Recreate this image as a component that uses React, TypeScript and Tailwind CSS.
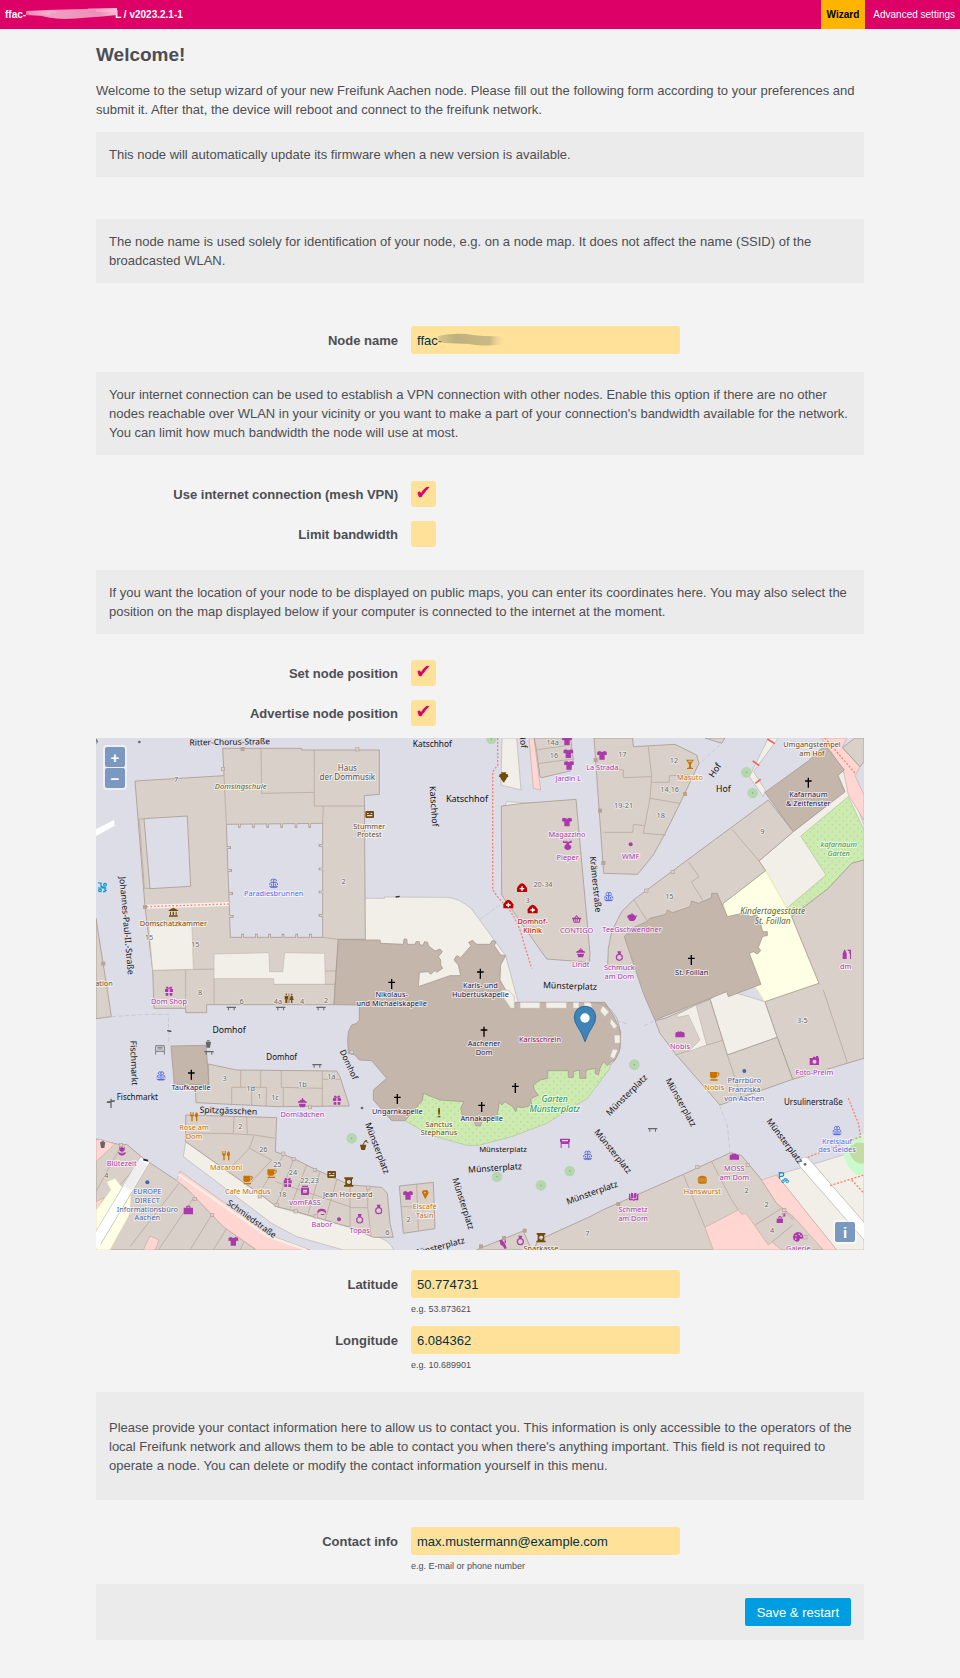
import { useState } from "react";
import type { InputHTMLAttributes, ReactNode } from "react";

/* ---------- map primitives (map units: three per pixel) ---------- */

type Kind =
  | "shirt" | "fountain" | "cross" | "gift" | "food" | "cup" | "burger" | "dot" | "museum" | "mask"
  | "medic" | "basket" | "cake" | "ring" | "teapot" | "bench" | "bottle" | "camera" | "glass" | "bag"
  | "bread" | "book" | "palette" | "bed" | "table" | "tulip" | "signpost" | "toilets" | "jar" | "planter"
  | "ice" | "statue" | "perfume" | "bin" | "vase" | "bike" | "parking" | "wig" | "bank" | "case" | "comb";

const GLYPHS: Record<Kind, ReactNode> = {
  shirt: <path d="M-6-13L-14-11 -15-2 -8-1V13H8V-1L15-2 14-11 6-13Q0-7-6-13Z" />,
  fountain: (
    <g fill="none" stroke="currentColor" strokeWidth="3">
      <path d="M0-12V10M0-10Q-8-15-8-5M0-10Q8-15 8-5M0-1Q-11-6-12 6M0-1Q11-6 12 6M-6 8V2M6 8V2" />
      <path d="M-13 10H13L8 14H-8Z" fill="currentColor" strokeWidth="1" />
    </g>
  ),
  cross: <path d="M-2-15H2V-7H10V-3H2V15H-2V-3H-10V-7H-2Z" />,
  gift: <path d="M-12-6H-2V3H-12ZM2-6H12V3H2ZM-10 6H-2V14H-10ZM2 6H10V14H2ZM-2-7Q-13-7-8-13Q-2-14 0-8Q2-14 8-13Q13-7 2-7Z" />,
  food: <path d="M-12-14V-6Q-12-1-8 0V14H-4V0Q0-1 0-6V-14H-2V-6H-5V-14H-7V-6H-10V-14ZM8-14Q1-9 3 0L6 2V14H10V2Q15-6 8-14Z" />,
  cup: (
    <g>
      <path d="M-13-12H8V1Q8 7 2 7H-7Q-13 7-13 1ZM-12 10H10V14H-12Z" />
      <path d="M8-9H14Q14 1 8 1" fill="none" stroke="currentColor" strokeWidth="3" />
    </g>
  ),
  burger: <path d="M-14-3Q-12-12 0-12Q12-12 14-3ZM-14-1H14V3H-14ZM-14 5H14Q13 12 8 12H-8Q-13 12-14 5Z" />,
  dot: <circle r="6" />,
  museum: <path d="M-14-6L0-14 14-6V-4H-14ZM-10-2H-7V8H-10ZM-2-2H2V8H-2ZM7-2H10V8H7ZM-13 9H13V13H-13Z" />,
  mask: (
    <path fillRule="evenodd" d="M-10-11H10Q13-11 13-8V7Q13 10 10 10H-10Q-13 10-13 7V-8Q-13-11-10-11ZM-8-5V-2H-3V-5ZM3-5V-2H8V-5ZM-8 1V5H8V1Z" />
  ),
  medic: (
    <g>
      <path d="M-15 12V0Q-9-12 0-14Q9-12 15 0V12Z" />
      <path d="M-2-5H2V0H7V4H2V9H-2V4H-7V0H-2Z" fill="#fff" />
    </g>
  ),
  basket: <path fillRule="evenodd" d="M-14-4H-7L0-12 7-4H14V-1H12L9 11H-9L-12-1H-14ZM-3-4H3L0-8ZM-7 1V8H-4V1ZM-1 1V8H2V1ZM4 1V8H7V1Z" />,
  cake: <path d="M-13 0Q-15-5-7-6Q-5-10-1-9V-14H2V-9Q6-10 8-5Q15-5 13 0ZM-11 3H11L7 14H-7Z" />,
  ring: (
    <g>
      <circle cy="4" r="9" fill="none" stroke="currentColor" strokeWidth="3.5" />
      <path d="M-6-14H6L3-5H-3Z" />
    </g>
  ),
  teapot: <path d="M-3-9Q0-15 3-9Q9-7 9-3L15-8 13 0Q10 9 5 11H-6Q-11 6-11 3Q-17-1-12-6Q-8-8-3-9Z" />,
  bench: <path d="M-14-5H14V-1H10V6H7V-1H-7V6H-10V-1H-14Z" />,
  bottle: <path d="M-9-14H-5V-9H-3V-5H-1V14H-13V-5H-11V-9H-9ZM2-14H12V14H9V-2H7V-10H2Z" />,
  camera: <path fillRule="evenodd" d="M-14-8H-5L-3-12H3L5-8V-14H12V-8H14V13H-14ZM0-3A6 6 0 1 0 1-3Z" />,
  glass: <path fillRule="evenodd" d="M-12-14H12L3 0V9L9 12V14H-9V12L-3 9V0ZM-7-11L-5-8H5L7-11Z" />,
  bag: <path d="M-14-7H-6V-13H6V-7H14V13H-14ZM-3-7H3V-10H-3Z" fillRule="evenodd" />,
  case: (
    <g>
      <path fillRule="evenodd" d="M-11 0H-6V-5Q-1-11 4-5V0H8V13H-11ZM-3 0H1V-4H-3Z" />
      <path d="M5-14H16M8-9H16M6-4L14-12M12-16V-5" stroke="currentColor" strokeWidth="2" />
    </g>
  ),
  bread: <path d="M-14 9V-1Q-13-9-8-6Q-5-12-1-7Q3-12 6-6Q13-9 14-1V9Z" />,
  book: <path d="M-14-9H-10V6Q-3 5 0 9Q3 5 10 6V-9H14V11H3L0 13-3 11H-14ZM-8-12Q-2-12-1-9V5Q-3 3-8 3ZM8-12Q2-12 1-9V5Q3 3 8 3Z" />,
  palette: <path fillRule="evenodd" d="M0-15Q17-13 15 2Q13 7 6 5Q4 15-3 14Q-15 12-15 0Q-13-14 0-15ZM-8-6V-2H-4V-6ZM2-10V-6H6V-10ZM-9 4V8H-5V4ZM7-5V-1H11V-5Z" />,
  bed: <path d="M-15-14H15V-4H13V14H10V2H-10V14H-13V-4H-15ZM-9-10V-6H9V-10Z" fillRule="evenodd" />,
  table: <path fill="none" stroke="currentColor" strokeWidth="2.5" d="M-13-13H13V4H-13ZM-13 4V14M13 4V14M-8-8H8M-8-3H8" />,
  tulip: <path d="M-8-14L-4-10 0-14 4-10 8-14V-5Q8 0 1 1V8Q5 2 12 3Q9 13 0 13Q-9 13-12 3Q-5 2-1 8V1Q-8 0-8-5Z" />,
  signpost: <path d="M-2-14H2V-9H13L10-4H2V14H-2V-1H-14L-10-7H-2Z" />,
  toilets: <path d="M-10-14H-6V-9H-10ZM-13-7H-3V3H-5V14H-11V3H-13ZM-1-14H1V14H-1ZM6-14H10V-9H6ZM5-7H11L14 5H10V14H6V5H2Z" />,
  jar: <path fillRule="evenodd" d="M-9-14H9V-10H-9ZM-12-8H12V10Q12 14 8 14H-8Q-12 14-12 10ZM-6-2V7H6V-2Z" />,
  planter: (
    <g>
      <path d="M-11-2H8L4 14H-7Z" />
      <path d="M-3 0L4-13 14-8M4-13L10-15" fill="none" stroke="currentColor" strokeWidth="3" />
    </g>
  ),
  ice: <path fillRule="evenodd" d="M-10-5Q-10-14-2-12Q8-16 10-4L0 15ZM-4-6V-3H2V-6Z" />,
  statue: <path d="M-2-14H2L3-5 2 6H-2L-3-5ZM-4 10H4V14H-4Z" />,
  comb: <path d="M-12-12L-4-14 6 0 10 12 4 14-2 4-8 2ZM4-12H8V-4H4Z" />,
  perfume: <path d="M-14-13H-10V-10H-6V-13H-2V-10H4L12-14V-6L4-5V-2Q12 2 11 8Q8 15 0 15Q-10 14-10 6Q-10 0-4-2V-6H-14Z" />,
  bin: <path d="M-8-8H8L5 10H-5ZM-4-12H4V-9H-4Z" />,
  vase: <path d="M-8-15H8L6-10H12L14-2 9 1 8 6 3 11V15H-3V11L-8 6-9 1-14-2-12-10H-6Z" />,
  bike: (
    <g fill="none" stroke="currentColor" strokeWidth="3.5">
      <circle cx="-7" cy="10" r="4" />
      <circle cx="8" cy="-7" r="4" />
      <path d="M-13-12H-4V-2L8 2V14H2M-13 3H12M8 10H13" />
    </g>
  ),
  parking: (
    <g fill="none" stroke="currentColor" strokeWidth="3.5">
      <path d="M-14 4V-15H-7Q-1-15-1-9.500Q-1-4-7-4H-13" />
      <circle cx="-3" cy="11" r="4" strokeWidth="2.5" />
      <circle cx="10" cy="11" r="4" strokeWidth="2.5" />
      <path d="M-3 11L2 3H8L10 11M2 3L5 10" strokeWidth="2.5" />
    </g>
  ),
  wig: <path d="M-13 5Q-15-10 0-10Q15-10 13 5Q9-3 0-3Q-8-3-13 5ZM-7 5L-8 9M0 6H8V9H-4Z" />,
  bank: <path fillRule="evenodd" d="M-13-14H13V-9H10V9H14V14H-14V9H-10V-9H-13ZM0-6A6 6 0 1 0 1-6Z" />,
};

const PURPLE = "#ac39ac";
const BROWN = "#734a08";
const ORANGE = "#c77400";
const WATER = "#576ddf";
const OFFICE = "#4863a8";
const CHURCH = "#171a5c";
const RED = "#bf0000";
const GREY = "#666666";

const ICONS: [Kind, number, number, string][] = [
  ["bike", 37, 456, "#0092da"], ["fountain", 551, 444, WATER], ["museum", 250, 532, BROWN], ["mask", 839, 239, BROWN],
  ["gift", 237, 768, PURPLE], ["vase", 1241, 127, BROWN], ["shirt", 1431, 17, PURPLE], ["shirt", 1435, 56, PURPLE],
  ["shirt", 1437, 91, PURPLE], ["shirt", 1536, 61, PURPLE], ["shirt", 1431, 261, PURPLE], ["perfume", 1433, 330, PURPLE],
  ["medic", 1296, 459, RED], ["medic", 1255, 508, RED], ["medic", 1328, 523, RED], ["basket", 1460, 552, PURPLE],
  ["cake", 1472, 653, PURPLE], ["cross", 905, 747, "#000"], ["cross", 1171, 716, "#000"], ["glass", 1800, 88, ORANGE],
  ["dot", 1622, 328, PURPLE], ["fountain", 1556, 484, WATER], ["teapot", 1626, 547, PURPLE], ["ring", 1588, 663, PURPLE],
  ["cross", 2155, 143, "#000"], ["cross", 1804, 675, "#000"], ["bottle", 2271, 658, PURPLE],
  ["toilets", 597, 790, BROWN], ["bench", 424, 820, GREY], ["bench", 572, 820, GREY], ["bench", 693, 820, GREY],
  ["bin", 355, 928, GREY], ["bench", 357, 953, GREY], ["bench", 681, 992, GREY], ["table", 210, 945, GREY],
  ["fountain", 213, 1022, WATER], ["cross", 304, 1019, "#000"], ["signpost", 63, 1105, GREY], ["cake", 637, 1103, PURPLE],
  ["gift", 741, 1095, PURPLE], ["food", 312, 1145, ORANGE], ["food", 408, 1262, ORANGE], ["cup", 473, 1334, ORANGE],
  ["cup", 545, 1315, ORANGE], ["gift", 593, 1342, PURPLE], ["jar", 645, 1366, PURPLE], ["mask", 725, 1319, BROWN],
  ["bank", 776, 1341, BROWN], ["wig", 695, 1431, PURPLE], ["dot", 747, 1453, PURPLE], ["bin", 38, 1229, GREY],
  ["tulip", 96, 1249, PURPLE], ["dot", 172, 1342, OFFICE], ["bag", 295, 1425, PURPLE], ["shirt", 430, 1519, PURPLE],
  ["cross", 1182, 890, "#000"], ["cross", 1276, 1059, "#000"], ["cross", 922, 1092, "#000"], ["cross", 1175, 1116, "#000"],
  ["statue", 1047, 1133, BROWN], ["planter", 821, 1231, BROWN], ["bed", 1425, 1225, PURPLE], ["fountain", 1493, 1260, WATER],
  ["shirt", 954, 1381, PURPLE], ["ice", 1006, 1378, ORANGE], ["ring", 866, 1423, PURPLE], ["ring", 809, 1451, PURPLE],
  ["ring", 1291, 1516, PURPLE], ["bank", 1353, 1508, BROWN], ["comb", 1240, 1528, PURPLE],
  ["bread", 1770, 898, PURPLE], ["cup", 1873, 1023, ORANGE], ["dot", 1963, 1008, OFFICE], ["camera", 2173, 977, PURPLE],
  ["fountain", 2241, 1186, WATER], ["bench", 1688, 1184, GREY], ["bread", 1933, 1265, PURPLE], ["burger", 1837, 1334, ORANGE],
  ["book", 1631, 1385, PURPLE], ["parking", 2082, 1328, "#0092da"], ["case", 2071, 1451, PURPLE], ["palette", 2124, 1506, PURPLE],
];

/* x, y of the first line's centre, lines, colour, size */
const PLACES: [number, number, string[], string, number?][] = [
  [551, 474, ["Paradiesbrunnen"], WATER], [250, 564, ["Domschatzkammer"], BROWN], [838, 272, ["Stummer", "Protest"], BROWN],
  [237, 798, ["Dom Shop"], PURPLE], [42, 744, ["ation"], BROWN], [772, 97, ["Haus", "der Dommusik"], "#555555", 24],
  [1435, 130, ["Jardin L"], PURPLE], [1537, 95, ["La Strada"], PURPLE], [1431, 297, ["Magazzino"], PURPLE],
  [1433, 366, ["Pieper"], PURPLE], [1328, 558, ["Domhof-", "Klinik"], RED], [1460, 585, ["CONTIGO"], PURPLE],
  [1472, 688, ["Lindt"], PURPLE], [905, 778, ["Nikolaus-", "und Michaelskapelle"], CHURCH],
  [1171, 751, ["Karls- und", "Hubertuskapelle"], CHURCH], [1800, 126, ["Masuto"], ORANGE], [1622, 362, ["WMF"], PURPLE],
  [1626, 581, ["TeeGschwendner"], PURPLE], [1588, 697, ["Schmuck", "am Dom"], PURPLE],
  [2166, 28, ["Umgangstempel", "am Hof"], BROWN], [2155, 177, ["Kafarnaum", "& Zeitfenster"], CHURCH],
  [1805, 711, ["St. Foillan"], CHURCH], [2267, 694, ["dm"], PURPLE], [303, 1055, ["Taufkapelle"], CHURCH],
  [637, 1138, ["Domlädchen"], PURPLE], [312, 1177, ["Rose am", "Dom"], ORANGE], [408, 1295, ["Macaroni"], ORANGE],
  [473, 1368, ["Café Mundus"], ORANGE], [645, 1400, ["vomFASS"], PURPLE], [773, 1377, ["Jean Horegard"], BROWN],
  [696, 1467, ["Babor"], PURPLE], [95, 1285, ["Blütezeit"], PURPLE],
  [172, 1369, ["EUROPE", "DIRECT", "Informationsbüro", "Aachen"], OFFICE], [1182, 924, ["Aachener", "Dom"], CHURCH],
  [1350, 912, ["Karlsschrein"], "#8b1a5c"], [922, 1128, ["Ungarnkapelle"], CHURCH], [1175, 1150, ["Annakapelle"], CHURCH],
  [1047, 1166, ["Sanctus", "Stephanus"], BROWN], [1004, 1413, ["Eiscafé", "Tasin"], ORANGE], [809, 1485, ["Topas"], PURPLE],
  [1353, 1538, ["Sparkasse"], BROWN], [1770, 934, ["Nobis"], PURPLE], [1873, 1057, ["Nobis"], ORANGE],
  [1963, 1036, ["Pfarrbüro", "Franziska", "von Aachen"], OFFICE], [2173, 1011, ["Foto-Preim"], PURPLE],
  [2241, 1217, ["Kreislauf", "des Geldes"], WATER], [1933, 1300, ["MOSS", "am Dom"], PURPLE], [1837, 1367, ["Hanswurst"], ORANGE],
  [1629, 1422, ["Schmetz", "am Dom"], PURPLE], [2125, 1539, ["Galerie"], PURPLE],
];

const NUMBERS: [number, number, string][] = [
  [258, 131, "7"], [761, 437, "2"], [177, 605, "15"], [316, 628, "15"], [330, 771, "8"], [455, 798, "6"], [564, 799, "4a"],
  [636, 797, "4"], [708, 795, "2"], [1388, 22, "14a"], [1392, 61, "16"], [1359, 448, "20-34"], [1313, 495, "3"],
  [1597, 58, "17"], [1752, 74, "12"], [1739, 161, "14,16"], [1601, 210, "19-21"], [1712, 241, "18"], [2017, 287, "9"],
  [1738, 482, "15"], [2137, 855, "3-5"], [404, 1030, "3"], [482, 1058, "1d"], [508, 1084, "1"], [555, 1086, "1c"],
  [637, 1046, "1b"], [724, 1024, "1a"], [451, 1173, "2"], [520, 1243, "26"], [562, 1288, "25"], [609, 1310, "24"],
  [659, 1334, "22,23"], [577, 1377, "18"], [49, 1319, "4"], [892, 1492, "6"], [956, 1453, "2"], [1492, 1493, "7"],
  [1970, 1364, "2"], [2030, 1406, "2"], [2046, 1484, "4"],
];

/* x, y centre, text, rotation, size */
const STREETS: [number, number, string, number, number][] = [
  [419, 19, "Ritter-Chorus-Straße", -1, 25], [1027, 26, "Katschhof", 0, 25], [1131, 189, "Katschhof", 0, 27],
  [1032, 214, "Katschhof", 86, 26], [110, 572, "Johannes-Paul-II.-Straße", 85, 26], [1517, 448, "Krämerstraße", 84, 26],
  [1440, 753, "Münsterplatz", 2, 26], [1874, 105, "Hof", -57, 27], [1900, 161, "Hof", 0, 26], [1299, 17, "Hof", 82, 26],
  [417, 884, "Domhof", 0, 26], [575, 963, "Domhof", 0, 24], [778, 988, "Domhof", 65, 25], [132, 984, "Fischmarkt", 88, 26],
  [142, 1083, "Fischmarkt", 0, 24], [415, 1127, "Spitzgässchen", 2, 26], [486, 1450, "Schmiedstraße", 36, 25],
  [1239, 1241, "Münsterplatz", 0, 23], [1215, 1299, "Münsterplatz", -4, 26], [862, 1239, "Münsterplatz", 69, 26],
  [1120, 1406, "Münsterplatz", 72, 26], [1506, 1373, "Münsterplatz", -20, 26], [1045, 1536, "Münsterplatz", -15, 26],
  [1610, 1080, "Münsterplatz", -45, 26], [1773, 1102, "Münsterplatz", 61, 26], [1569, 1249, "Münsterplatz", 51, 26],
  [2084, 1218, "Münsterplatz", 53, 26], [2170, 1099, "Ursulinerstraße", 0, 24],
];

const BUILDINGS = [
  "135,138 402,122 398,40 635,40 635,45 868,45 868,178 823,182 826,613 745,613 735,750 732,809 350,809 350,833 287,833 287,820 192,820 188,706 165,515",
  "18,550 40,690 53,770 64,845 18,851",
  "1234,213 1300,205 1458,193 1500,655 1498,682 1370,672 1340,630 1235,480",
  "1333,9 1340,50 1350,125 1355,128 1440,108 1450,75 1442,9",
  "1512,9 1628,9 1630,35 1755,28 1820,60 1827,85 1770,205 1728,290 1690,360 1643,418 1541,415",
  "1630,495 2035,195 2110,290 2007,378 2027,407 1900,505 1880,560 1700,640 1660,705 1600,705 1553,690 1555,640 1565,590 1595,530",
  "2257,38 2295,9 2322,9 2322,80 2310,95",
  "1845,9 1895,25 1905,9",
  "2105,545 2215,460 2285,385 2322,375 2322,970 2108,1033 2062,907 2025,800 2187,745",
  "1695,857 1725,850 1860,792 1912,960 2062,907 2108,1033 1890,1110 1755,955 1710,895",
  "1540,1424 1780,1318 1922,1253 1955,1262 2015,1335 2060,1405 2110,1445 2170,1505 2200,1545 1330,1545 1345,1515 1500,1445",
  "1170,1540 1300,1488 1325,1545 1160,1545",
  "928,1353 1030,1342 1035,1481 940,1495",
  "355,987 440,1005 740,1008 750,1025 778,1113 565,1115 318,1103 316,1055 355,1050",
  "287,1140 560,1148 556,1250 610,1270 680,1305 780,1350 875,1357 892,1375 900,1465 910,1507 850,1507 780,1477 620,1430 560,1415 500,1370 400,1300 287,1220",
  "18,1212 50,1220 95,1230 110,1228 160,1270 260,1337 300,1370 400,1475 500,1545 18,1545",
];

const WALLS =
  "M513 40L515 175 673 172M673 45V213H826M700 213L698 265M402 122L409 268M143 253L162 251M148 255L163 460H180M188 706L372 702M287 704V820M372 731V809M704 708H742V748H551M698 607L745 613" +
  "M1337 45L1440 30M1343 86L1448 72M1675 35L1685 125 1600 128 1600 105 1555 98M1685 125L1680 190 1770 205M1680 190L1660 295 1728 300M1541 292H1628L1630 268 1662 272M1685 142H1738V122L1800 120" +
  "M1926 283L2007 378M1795 380L1827 425 1804 442 1838 495M1632 495L1675 562M2200 765L2272 983M1755 960L1900 915M1912 960L1955 1088M1815 810L1850 930" +
  "M1780 1318L1845 1477M1865 1280L1925 1395 1945 1425M1995 1470L2075 1420 2110 1455M2035 1530L2108 1470" +
  "M980 1347L985 1487M935 1415H985" +
  "M452 1007V1057H425V1110M512 1007V1057M452 1057H485V1110M485 1057H530L528 1113M574 1007V1057L697 1060M580 1060V1115M697 1007V1115M700 1033H750" +
  "M287 1195L400 1195 492 1200 556 1210M432 1145L430 1195M470 1147L472 1198M492 1202L478 1240 545 1275M478 1240L410 1310M545 1275L470 1355M580 1262L510 1370M610 1275L560 1405M650 1290L600 1420M690 1310L655 1435M740 1335L705 1455M556 1340L780 1415M780 1350V1480M833 1357V1418L780 1418M833 1418L843 1500" +
  "M160 1270L55 1390M267 1345L120 1535M310 1390L205 1545M365 1440L300 1545M410 1480L370 1545M465 1515L450 1545M95 1230L18 1370";

const DOM =
  "745,613 824,615 870,615 872,625 940,628 942,612 950,612 952,628 975,628 978,620 988,620 990,630 1000,630 1003,620 1013,622 1015,632 1035,648 1050,642 1057,650 1045,665 1052,675 1052,690 1058,700 1040,712 1035,706 1022,718 1015,710 988,712 985,755 1080,722 1112,722 1105,690 1092,675 1100,662 1112,668 1143,632 1136,622 1148,616 1160,628 1200,628 1207,616 1218,620 1213,632 1232,660 1247,662 1232,690 1230,735 1247,765 1262,820 1275,820 1275,802 1545,802 1572,845 1592,890 1590,940 1575,975 1560,982 1552,992 1540,980 1530,1000 1525,1020 1515,1015 1518,1000 1488,1005 1487,1030 1470,1030 1468,1005 1450,1010 1450,1027 1435,1027 1435,1007 1373,1007 1373,1030 1350,1035 1330,1050 1333,1065 1345,1080 1322,1092 1325,1110 1298,1118 1282,1115 1277,1130 1268,1115 1252,1105 1245,1100 1235,1110 1228,1100 1222,1140 1175,1160 1172,1173 1158,1173 1152,1160 1120,1152 1112,1120 1122,1100 1050,1095 1000,1075 998,1095 945,1157 905,1157 850,1095 850,1065 890,1030 845,977 808,975 795,960 775,955 773,920 775,890 785,870 800,865 808,855 808,810 732,809";

const FOILLAN =
  "1603,605 1625,580 1670,560 1680,550 1728,538 1732,525 1748,533 1800,515 1805,498 1825,505 1865,488 1865,475 1882,475 1888,490 1912,545 1970,532 1980,545 2000,540 2013,570 2018,590 2032,590 2032,602 2018,604 2005,637 2012,647 2002,657 1990,650 1978,655 2013,748 1915,785 1910,770 1860,790 1695,855 1688,840 1660,775";

function CityMap() {
  return (
    <svg viewBox="18 9 2304 1536" role="img" aria-label="Map" className="block aspect-[3/2] w-full font-['Noto_Sans',sans-serif]">
      <defs>
        <pattern id="garden" width="22" height="22" patternUnits="userSpaceOnUse">
          <rect width="22" height="22" fill="#cdebb0" />
          <circle cx="5" cy="5" r="1.6" fill="#8fbf72" />
          <circle cx="16" cy="16" r="1.6" fill="#8fbf72" />
        </pattern>
      </defs>
      <rect x="18" y="9" width="2304" height="1536" fill="#dddde8" />

      {/* open ground */}
      <g fill="#f2efe9" stroke="#b8b4b0" strokeWidth="2">
        <path d="M824 490H883V486L1070 487Q1110 490 1145 522L1247 662 1290 822H824Z" />
        <path d="M1236 9H1280L1293 165 1233 150Z" />
        <path d="M1250 200L1330 205 1290 215 1245 212Z" />
        <path d="M2007 378L2110 290 2265 170 2245 120 2260 105 2322 270V400L2200 520 2105 545 2027 407Z" />
        <path d="M1860 792L1910 765 2025 800 2062 907 1912 960Z" />
        <path d="M287 1220L400 1300 500 1370 560 1415 780 1477 850 1503Q895 1510 912 1545H760L620 1505 545 1465 280 1265Z" />
        <path d="M2060 1320L2260 1260 2322 1245V1545H2240Z" />
        <path d="M2035 9H2065L1990 110 2026 165 2020 185 1978 125Z" />
      </g>
      <path d="M2032 12l22 14M1988 78l20 14M1996 145l16-12" stroke="#f06060" strokeWidth="5" />
      <path d="M18 283L72 255 74 272 18 303Z" fill="#fff" />

      {/* retail and school ground */}
      <g fill="#ffd6d1" stroke="#c9aaa6" strokeWidth="2">
        <path d="M1317 9H1332L1352 165 1330 160Z" />
        <path d="M2195 9H2270L2257 38 2310 95 2295 122 2322 180V255L2275 180 2260 105Z" />
      </g>
      <path d="M1900 505L2027 407 2105 545 2187 745 2025 800 1960 700Z" fill="#ffffe5" stroke="#f0eeb0" strokeWidth="3" />

      {/* gardens */}
      <g fill="url(#garden)" stroke="#a9c490" strokeWidth="2">
        <path d="M945 1157L1000 1075 1320 1060 1370 1005 1560 975V1000L1492 1090 1370 1165 1265 1205 1165 1231H1130L1020 1200Z" />
        <path d="M2132 303L2275 185 2322 285V375L2285 385 2215 460 2105 543 2090 520 2208 420Z" />
      </g>
      <path d="M2260 1255Q2260 1225 2322 1195V1325Q2275 1320 2260 1255Z" fill="#c8facc" />
      <path d="M2275 1240Q2300 1215 2322 1225V1285Q2285 1290 2275 1240Z" fill="#c3dba4" />

      {/* buildings */}
      <g fill="#d9d0c9" stroke="#a89c94" strokeWidth="2.5">
        {BUILDINGS.map((points) => (
          <polygon key={points} points={points} />
        ))}
      </g>
      <path d={WALLS} fill="none" stroke="#bcaa9d" strokeWidth="2.5" />
      <g fill="#dddde8" stroke="#a89c94" strokeWidth="2.5">
        <path d="M162 251L292 243 302 454 180 461Z" />
        <path d="M409 268L698 265V607H421Z" />
      </g>
      <path
        d="M448 266v12M490 266v12M533 266v12M575 266v12M618 266v12M659 266v12M458 608v-12M499 608v-12M539 608v-12M579 608v-12M620 608v-12M661 608v-12M411 338h12M414 406h12M417 475h12M419 544h12M698 331h-12M698 402h-12M698 471h-12M698 541h-12"
        stroke="#a89c94"
        strokeWidth="8"
      />
      <path
        d="M448 264v11M490 264v11M533 264v11M575 264v11M618 264v11M659 264v11M458 609v-10M499 609v-10M539 609v-10M579 609v-10M620 609v-10M661 609v-10M409 338h11M412 406h11M415 475h11M417 544h11M700 331h-11M700 402h-11M700 471h-11M700 541h-11"
        stroke="#d9d0c9"
        strokeWidth="4"
      />
      <g fill="#f2efe9" stroke="#c4b8ae" strokeWidth="2">
        <path d="M176 575L306 573 310 703 188 706Z" />
        <path d="M372 657L537 653 539 710H578L584 653 704 655 706 748H551V731H372Z" />
        <path d="M1760 840L1818 810 1850 930 1795 950 1830 915 1795 840 1765 847Z" />
      </g>

      {/* lower retail strips */}
      <g fill="#ffd6d1" stroke="#c9aaa6" strokeWidth="2">
        <path d="M270 1308L540 1500 660 1545H500L400 1475 290 1360 260 1337Z" />
        <path d="M18 1215L30 1212 75 1227 18 1280Z" />
        <path d="M18 1400L42 1388 18 1432Z" />
        <path d="M180 1503L207 1515 195 1545H160Z" />
        <path d="M1845 1477L1945 1425 1955 1438 1968 1435 2035 1530 2045 1520 2075 1545H1870Z" />
        <path d="M2015 1335L2060 1320 2240 1545H2200L2110 1445 2060 1405Z" />
      </g>
      <path d="M265 1318L530 1502 650 1545" fill="none" stroke="#f5efe8" strokeWidth="7" />
      <path d="M50 1340L75 1330 95 1355 125 1340 120 1435 110 1455 60 1545H18V1425L62 1365Z" fill="#ffffe5" stroke="#ddd8ae" strokeWidth="2" />
      <g fill="none">
        <path d="M165 1275L18 1520" stroke="#c4bdb8" strokeWidth="34" />
        <path d="M165 1275L10 1533" stroke="#fff" strokeWidth="30" />
        <path d="M160 1280L112 1360" stroke="#eeeeee" strokeWidth="29" />
        <path d="M2145 1285L2345 1515" stroke="#c4bdb8" strokeWidth="37" strokeLinecap="round" />
        <path d="M2145 1285L2345 1515" stroke="#fff" strokeWidth="33" strokeLinecap="round" />
        <path d="M160 1274l14 3" stroke="#222" strokeWidth="5" />
      </g>

      {/* churches */}
      <g fill="#c4b6ab" stroke="#a89c94" strokeWidth="2.5">
        <polygon points={DOM} />
        <polygon points={FOILLAN} />
        <path d="M2025 172L2155 78 2205 30 2263 105 2243 122 2265 170 2110 290Z" />
        <path d="M243 933L348 931 357 1048 253 1050Z" />
      </g>
      <g fill="#f2efe9" stroke="#c4b6ab" strokeWidth="2">
        <path d="M1235 765H1255L1273 785V820H1262L1235 780Z" />
        <path d="M1290 802H1350V820H1290ZM1368 802H1430V820H1368ZM1449 802H1467V820H1449ZM1482 802H1502L1507 815 1482 820Z" />
        <path d="M1538 812L1557 830 1545 845 1530 828ZM1562 850L1582 873 1572 883 1560 865ZM1572 900H1591V925H1574ZM1568 942L1584 945 1572 972 1560 965Z" />
      </g>
      <path d="M1500 802Q1555 800 1580 848 1598 895 1588 950 1575 980 1560 990" fill="none" stroke="#a89c94" strokeWidth="2" />

      {/* footpaths and boundaries */}
      <g fill="none">
        <path d="M165 515L417 507" stroke="#f7efec" strokeWidth="12" />
        <path d="M170 515L417 507" stroke="#fa8072" strokeWidth="4" strokeDasharray="5 6" />
        <g stroke="#fa8072" strokeWidth="4" strokeDasharray="6 5">
          <path d="M1223 9V90L1208 110V460Q1210 475 1255 520Q1290 570 1300 620L1325 700" />
          <path d="M2205 9L2298 118" />
          <path d="M2275 1090L2305 1165 2312 1205 2150 1268M2220 1352L2322 1320M2285 1335L2322 1375" />
        </g>
        <g stroke="#c0bfc6" strokeWidth="2" strokeDasharray="14 6">
          <path d="M64 845L170 838 235 838 237 930" />
          <path d="M1170 553L1235 505M1835 80L1890 30" />
          <path d="M1560 850L1615 868M1662 873L1700 853M1888 1110L1912 1170 1920 1250" />
        </g>
        <path d="M917 486l12-2M232 887l12 2" stroke="#333" strokeWidth="4" />
      </g>

      {/* trees and entrances */}
      <g fill="#b5d6ae">
        {[[1204, 12], [1969, 112], [1988, 174], [1633, 989], [785, 1210], [1221, 1325], [1439, 1308], [1353, 1351]].map(([x, y]) => (
          <g key={`${x}-${y}`}>
            <circle cx={x} cy={y} r="16" />
            <circle cx={x} cy={y} r="2" fill="#7aa070" />
          </g>
        ))}
      </g>
      <g fill="#b8a395">
        {[[458, 42], [165, 516], [40, 686], [1517, 75], [1530, 227], [1540, 384], [1785, 177], [1585, 1407], [1173, 1534], [1242, 1509], [1304, 1487]].map(
          ([x, y]) => (
            <rect key={`${x}-${y}`} x={x - 6} y={y - 6} width="12" height="12" />
          ),
        )}
      </g>
      <g fill="#d9d0c9" stroke="#b8a395" strokeWidth="2">
        {[[399, 102], [802, 43], [1748, 411], [1669, 467], [93, 1230], [580, 1256], [611, 1272], [675, 1305], [509, 1384], [560, 1410], [617, 1429], [677, 1444], [314, 1392], [366, 1440], [660, 1116], [835, 1358], [785, 951], [1822, 1296], [1973, 1290], [2083, 1425], [2146, 1507]].map(
          ([x, y]) => (
            <rect key={`${x}-${y}`} x={x - 5} y={y - 5} width="10" height="10" />
          ),
        )}
      </g>
      <g fill="#666">
        <circle cx="148" cy="21" r="4" />
        <circle cx="816" cy="1119" r="4" />
        <circle cx="2145" cy="1288" r="4" />
        <path d="M18 10L24 18 20 28" />
      </g>

      {/* icons */}
      {ICONS.map(([kind, x, y, color]) => (
        <g key={`${kind}-${x}-${y}`} transform={`translate(${x} ${y})`} fill={color} color={color}>
          {GLYPHS[kind]}
        </g>
      ))}

      {/* labels */}
      <g textAnchor="middle" dominantBaseline="central">
        <g fill="#666" fontSize="22" stroke="#ffffff" strokeOpacity="0.55" strokeWidth="5" strokeLinejoin="round" paintOrder="stroke">
          {NUMBERS.map(([x, y, text]) => (
            <text key={`${x}-${y}`} x={x} y={y}>
              {text}
            </text>
          ))}
        </g>
        <g stroke="#ffffff" strokeOpacity="0.6" strokeWidth="6" strokeLinejoin="round" paintOrder="stroke">
          {PLACES.map(([x, y, lines, color, size]) => (
            <text key={`${x}-${y}`} fill={color} fontSize={size ?? 22}>
              {lines.map((line, i) => (
                <tspan key={line} x={x} y={y + i * 26}>
                  {line}
                </tspan>
              ))}
            </text>
          ))}
          <g fontStyle="italic">
            <text x="452" y="152" fontSize="23" fill="#5f6417">Domsingschule</text>
            <text fontSize="25" fill="#5f6417">
              <tspan x="2048" y="526">Kindertagesstätte</tspan>
              <tspan x="2048" y="556">St. Foillan</tspan>
            </text>
            <text fontSize="22" fill="#23964f">
              <tspan x="2246" y="328">kafarnaum</tspan>
              <tspan x="2246" y="353">Garten</tspan>
            </text>
            <text fontSize="26" fill="#23964f">
              <tspan x="1394" y="1091">Garten</tspan>
              <tspan x="1394" y="1121">Münsterplatz</tspan>
            </text>
          </g>
        </g>
        <g fill="#111" stroke="#dddde8" strokeWidth="4" strokeLinejoin="round" paintOrder="stroke">
          {STREETS.map(([x, y, text, angle, size]) => (
            <text key={`${x}-${y}`} fontSize={size} transform={`translate(${x} ${y}) rotate(${angle})`}>
              {text}
            </text>
          ))}
        </g>
      </g>

      {/* node marker */}
      <path d="M1485 920Q1475 892 1462 874Q1453 860 1453 846Q1455 815 1485 814Q1515 815 1517 846Q1517 860 1508 874Q1495 892 1485 920Z" fill="#3f84b8" stroke="#2d6a98" strokeWidth="3" />
      <circle cx="1485" cy="849" r="14" fill="#fff" />
    </svg>
  );
}

/* ---------- form parts ---------- */

function Note({ children, roomy = false }: { children: ReactNode; roomy?: boolean }) {
  return <p className={roomy ? "bg-[#ebebeb] pt-[26px] pr-3 pb-[25px] pl-[13px]" : "bg-[#ebebeb] py-[13px] pr-3 pl-[13px]"}>{children}</p>;
}

function Row({ id, label, hint, children }: { id: string; label: string; hint?: string; children: ReactNode }) {
  return (
    <div className="grid grid-cols-[302px_1fr] items-center gap-x-[13px]">
      <label htmlFor={id} className="text-right font-bold">
        {label}
      </label>
      {children}
      {hint && <p className="col-start-2 pt-[3px] text-[9px] leading-4">{hint}</p>}
    </div>
  );
}

function TextBox(props: InputHTMLAttributes<HTMLInputElement>) {
  return (
    <input
      type="text"
      className="h-7 w-full rounded-[3px] bg-[#ffe199] px-[6px] text-[13px] text-[#003247] outline-none"
      {...props}
    />
  );
}

function Tick({ id, initial = false }: { id: string; initial?: boolean }) {
  const [on, setOn] = useState(initial);
  return (
    <input
      id={id}
      type="checkbox"
      checked={on}
      onChange={(e) => setOn(e.target.checked)}
      className="flex h-[26px] w-[25px] appearance-none justify-center rounded-[3px] bg-[#ffe199] font-['DejaVu_Sans',sans-serif] text-[19px] leading-[22px] text-[#dc0067] checked:before:content-['✔']"
    />
  );
}

const mapButton = "flex size-5 items-center justify-center rounded-[2px] bg-[#7b98c0] text-[15px] leading-none font-bold text-white";

export default function App() {
  return (
    <div className="min-h-screen bg-[#f3f3f3] pb-[38px] font-['Liberation_Sans',Arial,sans-serif] text-[13px] leading-[19px] text-[#4d4e53]">
      <header className="flex h-[29px] items-stretch justify-between bg-[#dc0067] text-[10px] text-white">
        <div className="flex items-center pl-[5px] font-bold">
          <span>ffac-</span>
          <div className="relative pl-[89px]">
            <span>L / v2023.2.1-1</span>
            <svg width="94" height="14" viewBox="0 0 94 14" aria-hidden="true" className="absolute top-[2px] left-0">
              <defs>
                <linearGradient id="smear" x1="0" x2="1">
                  <stop offset="0" stopColor="#f29cc0" stopOpacity="0.7" />
                  <stop offset="0.25" stopColor="#f0a0c2" />
                  <stop offset="0.8" stopColor="#ee8fb8" />
                  <stop offset="1" stopColor="#f6bcd4" />
                </linearGradient>
                <filter id="soft" x="-5%" y="-20%" width="110%" height="140%">
                  <feGaussianBlur stdDeviation="0.7" />
                </filter>
              </defs>
              <path d="M0 4L20 3Q60 2 91 1V8Q60 11 38 12Q22 11 16 9L0 8Z" fill="url(#smear)" filter="url(#soft)" />
              <path d="M1 5H30M3 7H24M62 2H90M70 4H90" stroke="#fbdde9" strokeWidth="0.8" opacity="0.6" />
            </svg>
          </div>
        </div>
        <nav className="flex">
          <a href="#wizard" className="flex items-center bg-[#ffb400] px-[6px] font-bold text-black">
            Wizard
          </a>
          <a href="#advanced" className="flex items-center pr-[5px] pl-2">
            Advanced settings
          </a>
        </nav>
      </header>

      <main className="mx-auto w-4/5">
        <form onSubmit={(e) => e.preventDefault()}>
          <h1 className="pt-[14px] text-[19px] leading-6 font-bold">Welcome!</h1>
          <p className="pt-[14px] pb-[13px]">
            Welcome to the setup wizard of your new Freifunk Aachen node. Please fill out the following form according to
            your preferences and submit it. After that, the device will reboot and connect to the freifunk network.
          </p>

          <Note>This node will automatically update its firmware when a new version is available.</Note>

          <div className="pt-[42px]">
            <Note>
              The node name is used solely for identification of your node, e.g. on a node map. It does not affect the
              name (SSID) of the broadcasted WLAN.
            </Note>
          </div>
          <div className="pt-[43px] pb-[18px]">
            <Row id="node-name" label="Node name">
              <div className="relative w-[269px]">
                <TextBox id="node-name" defaultValue="ffac-" />
                <svg width="72" height="16" viewBox="0 0 72 16" aria-hidden="true" className="absolute top-[6px] left-[26px]">
                  <defs>
                    <linearGradient id="smudge" x1="0" x2="1">
                      <stop offset="0" stopColor="#b9ab7c" stopOpacity="0.5" />
                      <stop offset="0.25" stopColor="#bfb080" />
                      <stop offset="0.75" stopColor="#c9b985" />
                      <stop offset="1" stopColor="#ffe199" stopOpacity="0" />
                    </linearGradient>
                  </defs>
                  <path d="M1 4Q20 0 36 3Q50 5 70 4L66 12Q50 15 32 12L8 11 2 10Z" fill="url(#smudge)" filter="url(#soft)" />
                </svg>
              </div>
            </Row>
          </div>

          <Note>
            Your internet connection can be used to establish a VPN connection with other nodes. Enable this option if
            there are no other nodes reachable over WLAN in your vicinity or you want to make a part of your connection's
            bandwidth available for the network. You can limit how much bandwidth the node will use at most.
          </Note>
          <div className="flex flex-col gap-[14px] pt-[26px] pb-[23px]">
            <Row id="mesh-vpn" label="Use internet connection (mesh VPN)">
              <Tick id="mesh-vpn" initial />
            </Row>
            <Row id="limit" label="Limit bandwidth">
              <Tick id="limit" />
            </Row>
          </div>

          <Note>
            If you want the location of your node to be displayed on public maps, you can enter its coordinates here. You
            may also select the position on the map displayed below if your computer is connected to the internet at the
            moment.
          </Note>
          <div className="flex flex-col gap-[14px] pt-[26px] pb-3">
            <Row id="set-position" label="Set node position">
              <Tick id="set-position" initial />
            </Row>
            <Row id="advertise" label="Advertise node position">
              <Tick id="advertise" initial />
            </Row>
          </div>

          <div className="relative overflow-hidden">
            <CityMap />
            <div className="absolute top-[7px] left-[7px] flex flex-col gap-px rounded-[4px] bg-white/50 p-[2px]">
              <button type="button" aria-label="Zoom in" className={mapButton}>
                +
              </button>
              <button type="button" aria-label="Zoom out" className={mapButton}>
                −
              </button>
            </div>
            <div className="absolute right-[7px] bottom-[6px] rounded-[4px] bg-white/50 p-[2px]">
              <button type="button" aria-label="Attributions" className={mapButton}>
                i
              </button>
            </div>
          </div>

          <div className="flex flex-col gap-[9px] pt-5 pb-[19px]">
            <Row id="latitude" label="Latitude" hint="e.g. 53.873621">
              <div className="w-[269px]">
                <TextBox id="latitude" defaultValue="50.774731" />
              </div>
            </Row>
            <Row id="longitude" label="Longitude" hint="e.g. 10.689901">
              <div className="w-[269px]">
                <TextBox id="longitude" defaultValue="6.084362" />
              </div>
            </Row>
          </div>

          <Note roomy>
            Please provide your contact information here to allow us to contact you. This information is only accessible
            to the operators of the local Freifunk network and allows them to be able to contact you when there's anything
            important. This field is not required to operate a node. You can delete or modify the contact information
            yourself in this menu.
          </Note>
          <div className="pt-[27px] pb-[10px]">
            <Row id="contact" label="Contact info" hint="e.g. E-mail or phone number">
              <div className="w-[269px]">
                <TextBox id="contact" defaultValue="max.mustermann@example.com" />
              </div>
            </Row>
          </div>

          <div className="flex justify-end bg-[#ebebeb] px-[13px] py-[14px]">
            <button type="submit" className="h-7 rounded-[2px] bg-[#009ee0] px-3 text-white">
              Save &amp; restart
            </button>
          </div>
        </form>
      </main>
    </div>
  );
}
